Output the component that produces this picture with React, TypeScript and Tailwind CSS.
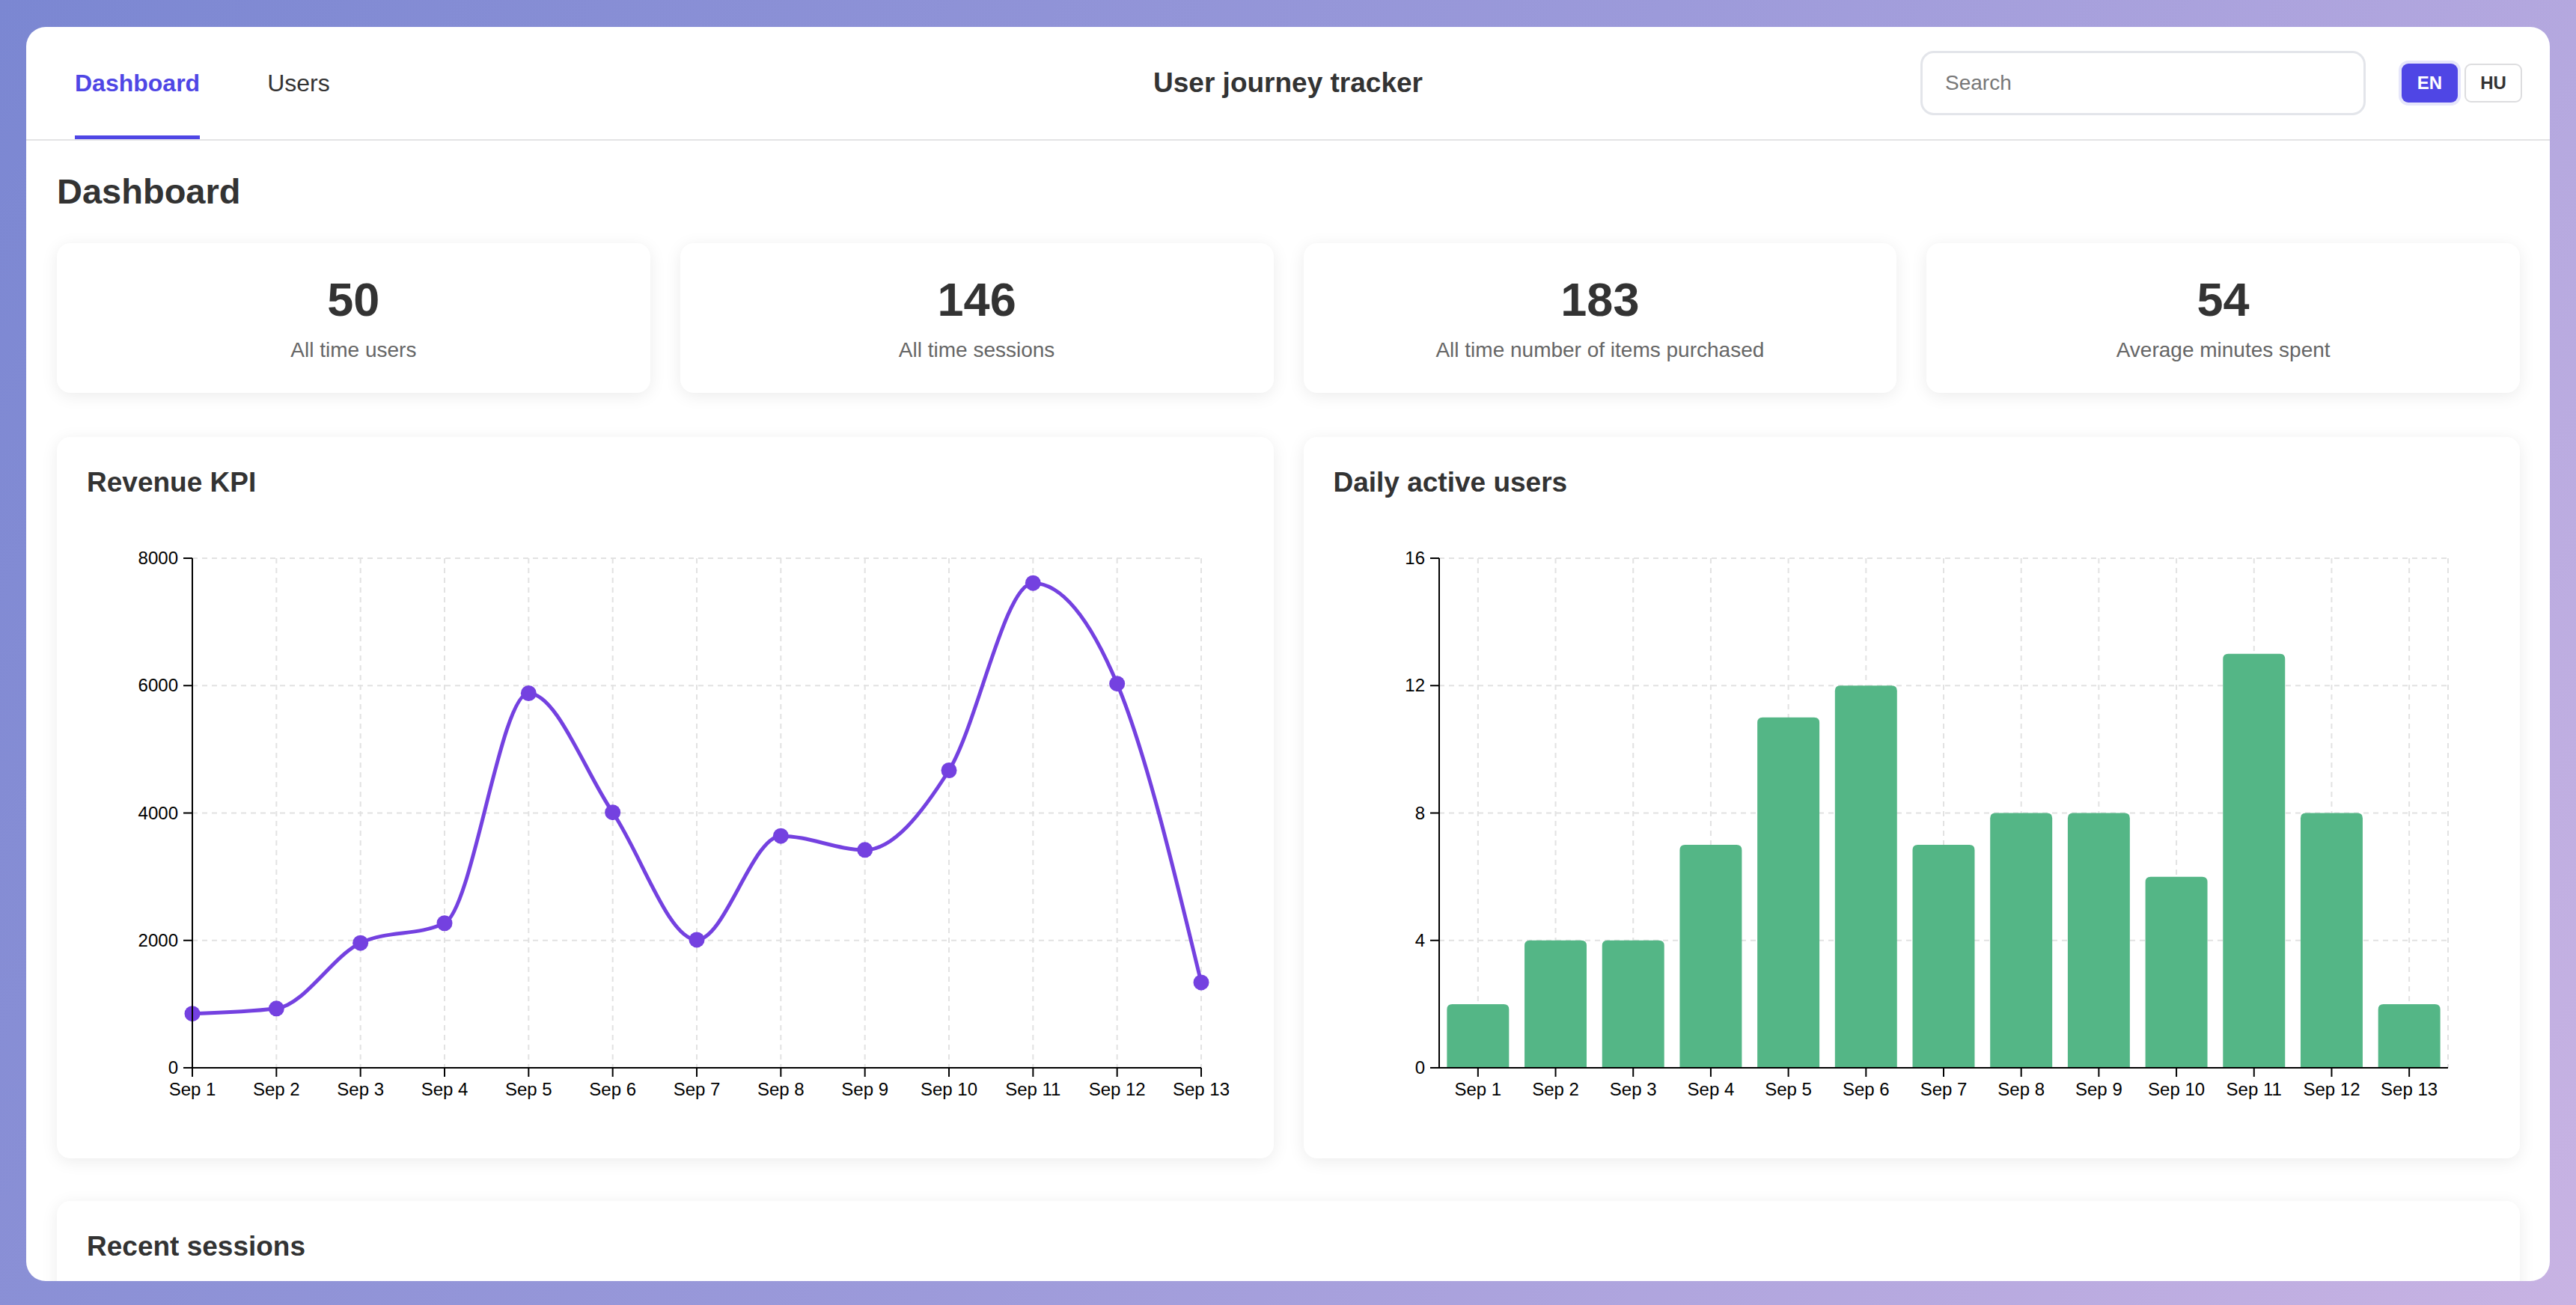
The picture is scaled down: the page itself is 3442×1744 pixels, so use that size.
import { useMemo } from "react";

const days = Array.from({ length: 13 }, (_, i) => `Sep ${i + 1}`);
const revenue = [850, 930, 1960, 2270, 5880, 4010, 2010, 3640, 3420, 4670, 7610, 6030, 1340];
const activeUsers = [2, 4, 4, 7, 11, 12, 7, 8, 8, 6, 13, 8, 2];

const stats = [
	{ value: 50, label: "All time users" },
	{ value: 146, label: "All time sessions" },
	{ value: 183, label: "All time number of items purchased" },
	{ value: 54, label: "Average minutes spent" },
];

// chart frame, in svg units (1 unit = 1 screen px)
const W = 1546;
const H = 808;
const L = 141;
const R = 1489;
const T = 46;
const B = 727;

type Pt = [number, number];

// same tangents as d3.curveMonotoneX
function monotonePath(pts: Pt[]) {
	const n = pts.length;
	const t: number[] = new Array(n).fill(0);
	const sign = (v: number) => (v < 0 ? -1 : 1);
	for (let i = 1; i < n - 1; i++) {
		const [x0, y0] = pts[i - 1];
		const [x1, y1] = pts[i];
		const [x2, y2] = pts[i + 1];
		const h0 = x1 - x0;
		const h1 = x2 - x1;
		const s0 = (y1 - y0) / h0;
		const s1 = (y2 - y1) / h1;
		const p = (s0 * h1 + s1 * h0) / (h0 + h1);
		t[i] =
			(sign(s0) + sign(s1)) *
				Math.min(Math.abs(s0), Math.abs(s1), 0.5 * Math.abs(p)) || 0;
	}
	const h = pts[1][0] - pts[0][0];
	t[0] = ((3 * (pts[1][1] - pts[0][1])) / h - t[1]) / 2;
	const hn = pts[n - 1][0] - pts[n - 2][0];
	t[n - 1] = ((3 * (pts[n - 1][1] - pts[n - 2][1])) / hn - t[n - 2]) / 2;

	let d = `M${pts[0][0]},${pts[0][1]}`;
	for (let i = 0; i < n - 1; i++) {
		const [x0, y0] = pts[i];
		const [x1, y1] = pts[i + 1];
		const dx = (x1 - x0) / 3;
		d += `C${x0 + dx},${y0 + dx * t[i]} ${x1 - dx},${y1 - dx * t[i + 1]} ${x1},${y1}`;
	}
	return d;
}

function barPath(x: number, y: number, w: number, h: number, r: number) {
	return `M${x},${y + h}V${y + r}Q${x},${y} ${x + r},${y}H${x + w - r}Q${x + w},${y} ${x + w},${y + r}V${y + h}Z`;
}

function Frame({
	xs,
	ticks,
	max,
	extraRightLine,
	children,
}: {
	xs: number[];
	ticks: number[];
	max: number;
	extraRightLine?: boolean;
	children: React.ReactNode;
}) {
	const yOf = (v: number) => B - (v / max) * (B - T);
	const gridXs = extraRightLine ? [...xs, R] : xs;
	return (
		<svg
			width={W}
			height={H}
			viewBox={`0 0 ${W} ${H}`}
			className="block font-['Liberation_Sans',Arial,sans-serif]"
		>
			{/* grid */}
			<g stroke="#e2e2e2" strokeWidth={2} strokeDasharray="7 6">
				{ticks.map((v) => (
					<line key={`h${v}`} x1={L} x2={R} y1={yOf(v)} y2={yOf(v)} />
				))}
				{gridXs.map((x) => (
					<line key={`v${x}`} x1={x} x2={x} y1={T} y2={B} />
				))}
			</g>

			{children}

			{/* y axis */}
			<g stroke="#000" strokeWidth={2}>
				<line x1={L} x2={L} y1={T} y2={B + 1} />
				{ticks.map((v) => (
					<line key={v} x1={L - 12} x2={L} y1={yOf(v)} y2={yOf(v)} />
				))}
			</g>
			{ticks.map((v) => (
				<text
					key={v}
					x={L - 19}
					y={yOf(v)}
					dy="0.34em"
					textAnchor="end"
					fontSize={24}
					fill="#000"
				>
					{v}
				</text>
			))}

			{/* x axis */}
			<g stroke="#000" strokeWidth={2}>
				<line x1={L - 1} x2={R} y1={B} y2={B} />
				{xs.map((x) => (
					<line key={x} x1={x} x2={x} y1={B} y2={B + 12} />
				))}
			</g>
			{xs.map((x, i) => (
				<text
					key={x}
					x={x}
					y={B + 19}
					dy="0.75em"
					textAnchor="middle"
					fontSize={24}
					fill="#000"
				>
					{days[i]}
				</text>
			))}
		</svg>
	);
}

function RevenueChart() {
	const pts = useMemo(() => {
		const step = (R - L) / (revenue.length - 1);
		return revenue.map((v, i) => [L + i * step, B - (v / 8000) * (B - T)] as Pt);
	}, []);

	return (
		<Frame xs={pts.map((p) => p[0])} ticks={[0, 2000, 4000, 6000, 8000]} max={8000}>
			<path d={monotonePath(pts)} fill="none" stroke="#7441e0" strokeWidth={5} />
			{pts.map(([x, y]) => (
				<circle key={x} cx={x} cy={y} r={10.5} fill="#7441e0" />
			))}
		</Frame>
	);
}

function ActiveUsersChart() {
	const n = activeUsers.length;
	const step = (R - L) / n;
	const bw = step * 0.8;
	const start = L + (R - L - step * (n - 0.2)) / 2;
	const centers = activeUsers.map((_, i) => start + i * step + bw / 2);

	return (
		<Frame xs={centers} ticks={[0, 4, 8, 12, 16]} max={16} extraRightLine>
			{activeUsers.map((v, i) => {
				const h = (v / 16) * (B - T);
				return (
					<path
						key={days[i]}
						d={barPath(start + i * step, B - h, bw, h, 7)}
						fill="#54b686"
					/>
				);
			})}
		</Frame>
	);
}

function Card({ title, children }: { title: string; children?: React.ReactNode }) {
	return (
		<div className="rounded-[18px] bg-white p-[40px] shadow-[0_4px_22px_rgba(0,0,0,0.08)]">
			<h2 className="text-[37px] font-bold leading-[42px] text-[#333]">{title}</h2>
			{children}
		</div>
	);
}

export default function App() {
	return (
		<div className="h-screen w-full overflow-hidden bg-[linear-gradient(120deg,#7b87d2_0%,#9c9ada_50%,#c8b3e3_100%)] px-[35px] pt-[36px] pb-[32px] font-['Liberation_Sans',Arial,sans-serif] text-[#333]">
			<div className="flex h-full flex-col overflow-hidden rounded-[26px] bg-white">
				{/* Top bar */}
				<header className="grid h-[152px] shrink-0 grid-cols-[1fr_auto_1fr] border-b-2 border-[#e3e3e5] px-[37px]">
					<nav className="flex items-stretch gap-[90px] pl-[28px]">
						<a className="flex items-center border-b-[5px] border-[#4f46e5] pt-[5px] text-[32px] font-bold text-[#4f46e5]">
							Dashboard
						</a>
						<a className="flex items-center border-b-[5px] border-transparent pt-[5px] text-[32px] text-[#333]">
							Users
						</a>
					</nav>

					<div className="flex items-center text-[37px] font-bold text-[#333]">
						User journey tracker
					</div>

					<div className="flex items-center justify-end">
						<input
							placeholder="Search"
							className="h-[86px] w-[595px] rounded-[18px] border-[3px] border-[#e3e5ea] px-[30px] text-[28px] text-[#333] outline-none placeholder:text-[#777]"
						/>
						<div className="ml-[48px] flex gap-[9px]">
							<button
								type="button"
								className="h-[52px] w-[75px] rounded-[9px] bg-[#4f46e5] text-[24px] font-bold text-white shadow-[0_0_0_4px_#e6e6fb]"
							>
								EN
							</button>
							<button
								type="button"
								className="h-[52px] w-[77px] rounded-[9px] border-2 border-[#dddddf] bg-white text-[24px] font-bold text-[#333]"
							>
								HU
							</button>
						</div>
					</div>
				</header>

				{/* Content */}
				<main className="flex-1 overflow-hidden pl-[41px] pr-[40px] pt-[40px]">
					<h1 className="mb-[41px] text-[47px] font-bold leading-[56px] text-[#333]">
						Dashboard
					</h1>

					<div className="mb-[59px] grid grid-cols-4 gap-[40px]">
						{stats.map((s) => (
							<div
								key={s.label}
								className="flex h-[200px] flex-col items-center justify-center gap-[9px] rounded-[18px] bg-white shadow-[0_4px_22px_rgba(0,0,0,0.08)]"
							>
								<span className="text-[63px] font-bold leading-[76px] text-[#333]">
									{s.value}
								</span>
								<span className="text-[28px] leading-[42px] text-[#666]">{s.label}</span>
							</div>
						))}
					</div>

					<div className="mb-[57px] grid grid-cols-2 gap-[40px]">
						<Card title="Revenue KPI">
							<div className="mt-[34px]">
								<RevenueChart />
							</div>
						</Card>
						<Card title="Daily active users">
							<div className="mt-[34px]">
								<ActiveUsersChart />
							</div>
						</Card>
					</div>

					<Card title="Recent sessions">
						<div className="h-[400px]" />
					</Card>
				</main>
			</div>
		</div>
	);
}
